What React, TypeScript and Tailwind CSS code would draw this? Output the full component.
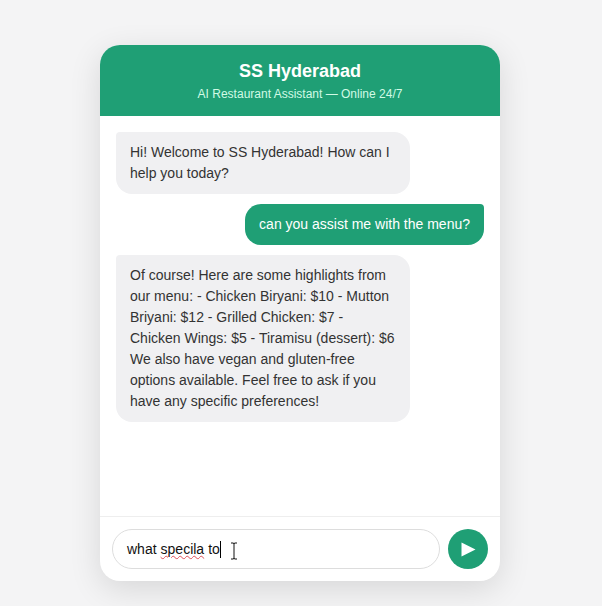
export default function App() {
  return (
    <div className="min-h-[606px] bg-[#f4f4f5] flex pl-[100px] pt-[45px] font-['Liberation_Sans',Arial,sans-serif]">
      <div className="w-[400px] h-[536px] bg-white rounded-[20px] overflow-hidden flex flex-col shadow-[0_8px_32px_rgba(0,0,0,0.12)]">
        <div className="h-[71px] bg-[#1f9f75] text-white flex flex-col items-center pt-[15px]">
          <div className="text-[18px] leading-[22px] font-bold">SS Hyderabad</div>
          <div className="text-[12px] leading-[14px] mt-[5px] text-[#d1fae5]">AI Restaurant Assistant — Online 24/7</div>
        </div>
        <div className="flex-1 flex flex-col gap-[10px] p-4 text-[14px] leading-[21px] text-[#333333]">
          <div className="w-[294px] self-start bg-[#f0f0f2] rounded-[16px] rounded-tl-[4px] px-[14px] py-[10px]">
            Hi! Welcome to SS Hyderabad! How can I help you today?
          </div>
          <div className="self-end bg-[#1f9f75] text-white rounded-[16px] rounded-tr-[4px] px-[14px] py-[10px]">
            can you assist me with the menu?
          </div>
          <div className="w-[294px] self-start bg-[#f0f0f2] rounded-[16px] rounded-tl-[4px] px-[14px] py-[10px]">
            Of course! Here are some highlights from our menu: - Chicken Biryani: $10 - Mutton Briyani: $12 - Grilled Chicken: $7 - Chicken Wings: $5 - Tiramisu (dessert): $6 We also have vegan and gluten-free options available. Feel free to ask if you have any specific preferences!
          </div>
        </div>
        <div className="h-[65px] border-t border-[#eeeeee] flex items-center gap-2 px-3">
          <div className="relative flex-1 h-10 rounded-[20px] border border-[#dddddd] flex items-center px-[14px] text-[14px] text-[#111111]">
            <span>what </span>
            <span className="ml-[4px] underline decoration-wavy decoration-[#e0505a] decoration-1">specila</span>
            <span className="ml-[4px]">to</span>
            <span className="w-px h-[17px] bg-black" />
            <svg className="absolute left-[116px] top-[12px]" width="10" height="18" viewBox="0 0 10 18" fill="none" stroke="#111" strokeWidth="1">
              <path d="M2 1h2.5L5 2l.5-1H8M5 2v14M2 17h2.5L5 16l.5 1H8" />
            </svg>
          </div>
          <div className="w-10 h-10 rounded-full bg-[#1f9f75] flex items-center justify-center">
            <svg className="mr-[-1px]" width="15" height="15" viewBox="0 0 15 15" fill="#ffffff"><path d="M0.5 0.5 14.5 7.5 0.5 14.5 Z" /></svg>
          </div>
        </div>
      </div>
    </div>
  );
}
